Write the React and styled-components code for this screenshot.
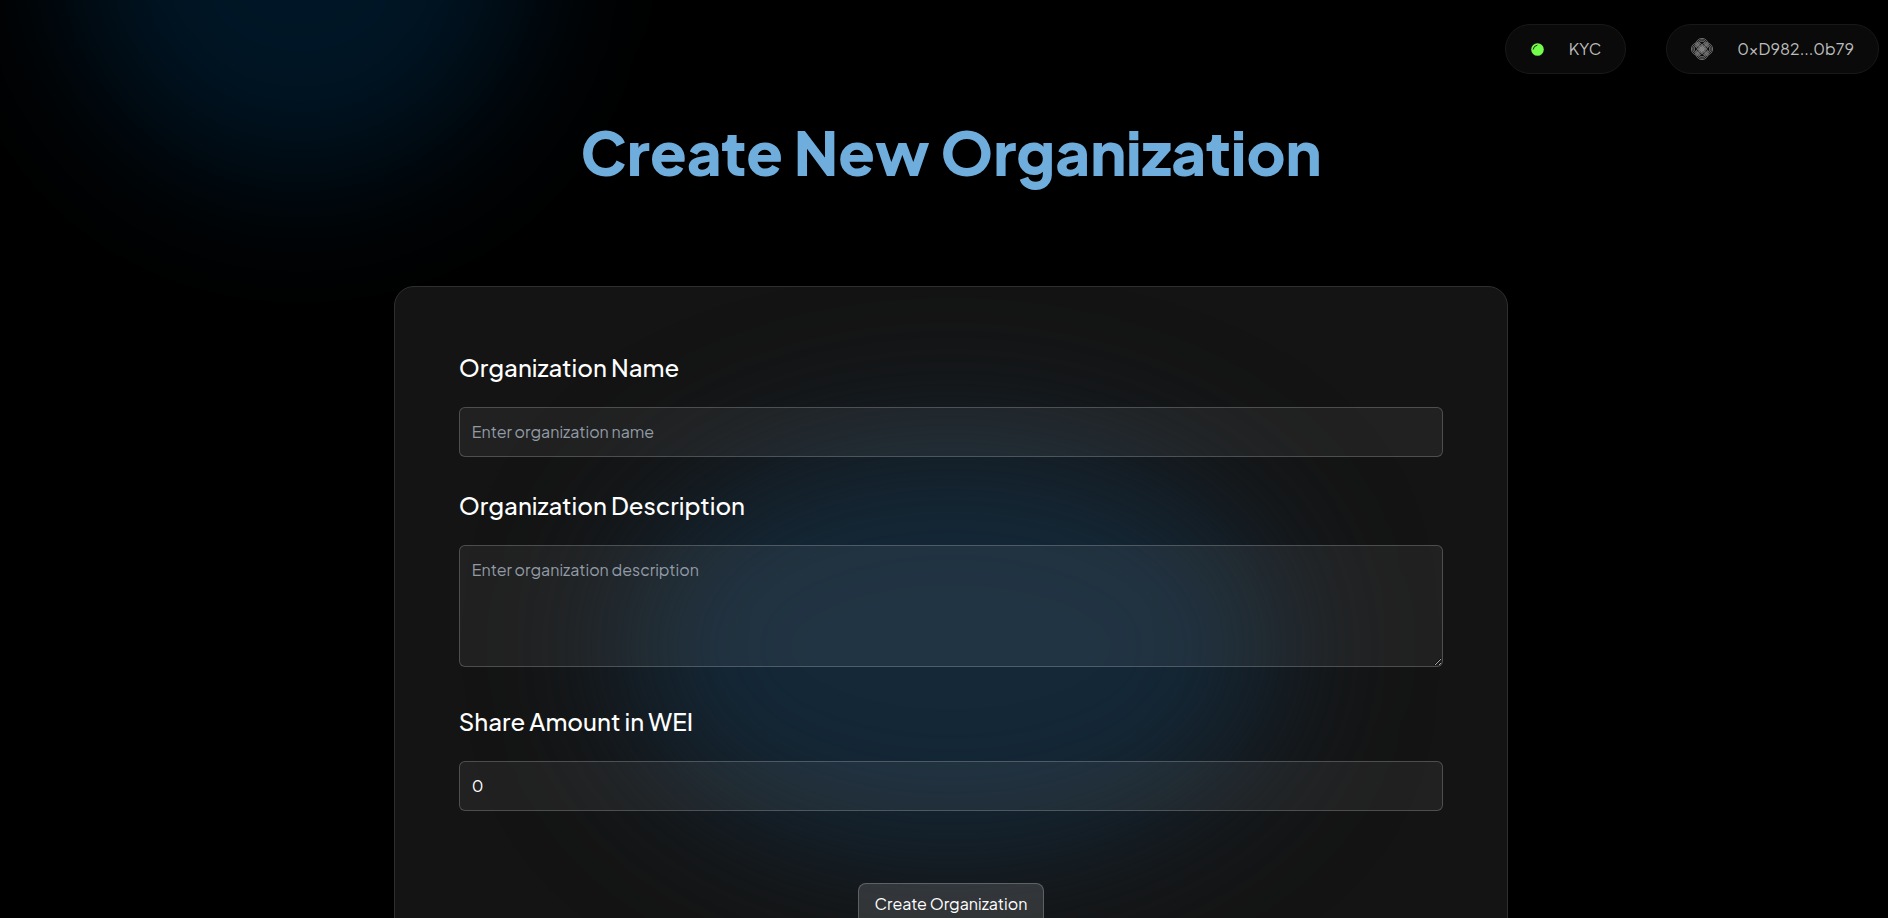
import { useState } from "react";
import styled, { createGlobalStyle } from "styled-components";

function Header() {
  return (
    <HeaderContainer>
      <Pill type="button">
        <StatusDot />
        KYC
      </Pill>
      <Pill type="button">
        <WalletIcon />
        0xD982...0b79
      </Pill>
    </HeaderContainer>
  );
}

function StatusDot() {
  return (
    <svg width="15" height="15" viewBox="0 0 15 15" aria-hidden="true">
      <circle cx="7.5" cy="7.5" r="6.3" fill="#75fb4c" />
      <path
        d="M3.2 7.2A4.6 4.6 0 0 1 7 3.2"
        fill="none"
        stroke="#0a2a05"
        strokeWidth="1"
        strokeLinecap="round"
      />
    </svg>
  );
}

function WalletIcon() {
  return (
    <svg
      width="22"
      height="22"
      viewBox="0 0 22 22"
      fill="none"
      stroke="#858585"
      strokeWidth="0.8"
      aria-hidden="true"
    >
      {[6.2, 4.8, 3.4].map((r) => (
        <g key={r}>
          <circle cx="11" cy="6.6" r={r} />
          <circle cx="11" cy="15.4" r={r} />
          <circle cx="6.6" cy="11" r={r} />
          <circle cx="15.4" cy="11" r={r} />
        </g>
      ))}
      <path d="M8 12l4-4M9 13l4-4M10 14l4-4" />
    </svg>
  );
}

function App() {
  const [name, setName] = useState("");
  const [description, setDescription] = useState("");
  const [amount, setAmount] = useState("0");

  return (
    <Page>
      <GlobalStyle />
      <CornerGlow />
      <Header />
      <Main>
        <Title>Create New Organization</Title>
        <Card onSubmit={(e) => e.preventDefault()}>
          <Field>
            <Label htmlFor="name">Organization Name</Label>
            <Input
              id="name"
              type="text"
              placeholder="Enter organization name"
              value={name}
              onChange={(e) => setName(e.target.value)}
            />
          </Field>
          <Field>
            <Label htmlFor="description">Organization Description</Label>
            <TextArea
              id="description"
              placeholder="Enter organization description"
              value={description}
              onChange={(e) => setDescription(e.target.value)}
            />
          </Field>
          <Field>
            <Label htmlFor="amount">Share Amount in WEI</Label>
            <Input
              id="amount"
              type="text"
              inputMode="numeric"
              value={amount}
              onChange={(e) => setAmount(e.target.value)}
            />
          </Field>
          <SubmitButton type="submit">Create Organization</SubmitButton>
        </Card>
      </Main>
    </Page>
  );
}

export default App;

const GlobalStyle = createGlobalStyle`
  * {
    box-sizing: border-box;
  }
  html {
    background: #000;
    scrollbar-width: none;
  }
  body {
    margin: 0;
    color: white;
    font-family: "Plus Jakarta Sans", Inter, sans-serif;
    font-size: 16px;
  }
`;

const Page = styled.div`
  position: relative;
  min-height: 100vh;
  overflow: hidden;
  background: #000;
`;

const CornerGlow = styled.div`
  position: absolute;
  top: -280px;
  left: 70px;
  width: 460px;
  height: 460px;
  border-radius: 50%;
  background: #001626;
  filter: blur(70px);
  pointer-events: none;
`;

const HeaderContainer = styled.header`
  position: relative;
  display: flex;
  justify-content: flex-end;
  gap: 40px;
  padding: 24px 9px 0 24px;
`;

const Pill = styled.button`
  display: flex;
  align-items: center;
  gap: 24px;
  height: 50px;
  padding: 0 24px;
  border: 1px solid #181818;
  border-radius: 25px;
  background: #0a0a0a;
  color: #bcbcbc;
  font-family: inherit;
  font-size: 16px;
  line-height: 24px;
  cursor: pointer;
`;

const Main = styled.main`
  position: relative;
  display: flex;
  flex-flow: column;
  align-items: center;
  padding: 40px 0 64px 14px;
`;

const Title = styled.h1`
  margin: 0 0 96px;
  color: #6eaddc;
  font-size: 60px;
  font-weight: 800;
  line-height: 76px;
`;

const Card = styled.form`
  position: relative;
  display: flex;
  flex-flow: column;
  gap: 32px;
  width: calc(60% - 10px);
  min-width: 320px;
  padding: 64px;
  border: 1px solid #2f2f2f;
  border-radius: 20px;
  background: #141414;
  isolation: isolate;
  overflow: hidden;

  &::before {
    content: "";
    position: absolute;
    z-index: -1;
    top: 150px;
    left: 50%;
    width: 660px;
    height: 420px;
    margin-left: -330px;
    border-radius: 50%;
    background: #142838;
    filter: blur(70px);
  }
`;

const Field = styled.div`
  display: flex;
  flex-flow: column;
  gap: 24px;
`;

const Label = styled.label`
  font-size: 24px;
  font-weight: 500;
  line-height: 32px;
`;

const Input = styled.input`
  width: 100%;
  height: 50px;
  padding: 11px 12px 13px;
  border: 1px solid rgba(255, 255, 255, 0.2);
  border-radius: 6px;
  outline: none;
  background: rgba(255, 255, 255, 0.06);
  color: white;
  font-family: inherit;
  font-size: 16px;
  line-height: 24px;
  &::placeholder {
    color: #929ba5;
    opacity: 1;
  }
  &:focus {
    border-color: #6eaddc;
  }
`;
const TextArea = styled(Input).attrs({ as: "textarea" })`
  height: 122px;
  margin-bottom: 6px;
  padding: 12px;
  resize: vertical;
`;

const SubmitButton = styled.button`
  align-self: center;
  margin-top: 40px;
  padding: 8px 16px;
  border: 1px solid rgba(255, 255, 255, 0.22);
  border-radius: 8px;
  background: rgba(255, 255, 255, 0.13);
  color: white;
  font-family: inherit;
  font-size: 16px;
  line-height: 24px;
  cursor: pointer;
`;
